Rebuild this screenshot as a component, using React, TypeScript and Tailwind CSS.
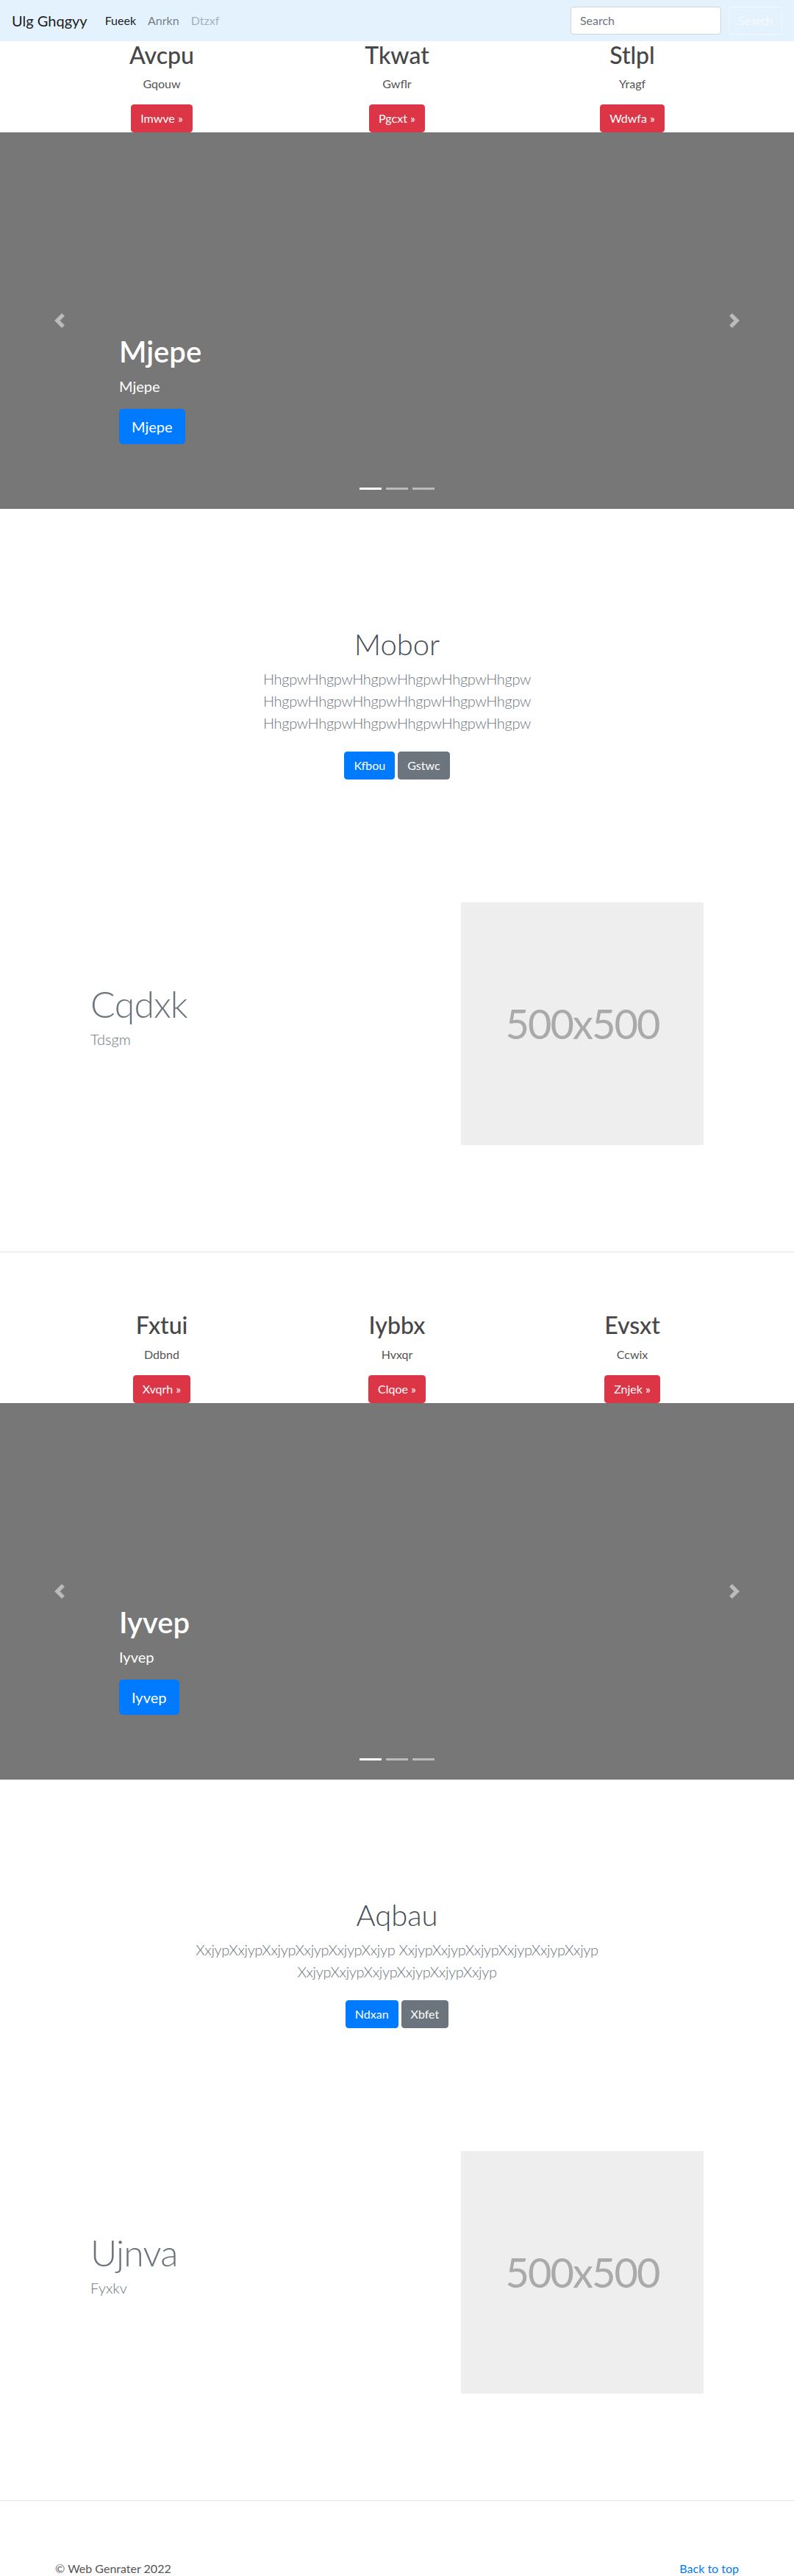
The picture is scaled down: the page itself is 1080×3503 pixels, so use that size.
import React from "react";

type Mk = { t: string; s: string; b: string };

function Marketing({ items, top }: { items: Mk[]; top: string }) {
  return (
    <div className={"mx-auto grid w-[960px] grid-cols-3 " + top}>
      {items.map((it) => (
        <div key={it.t} className="px-[15px] text-center">
          <h2 className="mb-2 text-[32px] leading-[1.2] font-medium text-[#474747]">{it.t}</h2>
          <p className="mb-4 text-base leading-6 text-[#555555]">{it.s}</p>
          <div className="flex justify-center">
            <a className="rounded-[4px] border border-[#dc3545] bg-[#dc3545] px-3 py-[6px] text-base leading-6 text-white">
              {it.b} »
            </a>
          </div>
        </div>
      ))}
    </div>
  );
}

function Chevron({ dir }: { dir: "l" | "r" }) {
  return (
    <svg width="20" height="20" viewBox="0 0 8 8" fill="#fff">
      {dir === "l" ? (
        <path d="M5.25 0l-4 4 4 4 1.5-1.5L4.25 4l2.5-2.5L5.25 0z" />
      ) : (
        <path d="M2.75 0l-1.5 1.5L3.75 4l-2.5 2.5L2.75 8l4-4-4-4z" />
      )}
    </svg>
  );
}

function Carousel({ title }: { title: string }) {
  return (
    <div className="relative mb-16 h-[512px] bg-[#777777]">
      <div className="absolute left-0 top-0 bottom-0 flex w-[15%] items-center justify-center opacity-50">
        <Chevron dir="l" />
      </div>
      <div className="absolute right-0 top-0 bottom-0 flex w-[15%] items-center justify-center opacity-50">
        <Chevron dir="r" />
      </div>
      <div className="absolute left-[15%] right-[15%] bottom-[88px] text-left text-white">
        <h1 className="mb-2 text-[40px] leading-[1.2] font-semibold">{title}</h1>
        <p className="mb-4 text-[20px] leading-[30px]">{title}</p>
        <div className="flex">
          <a className="rounded-[5px] border border-[#007bff] bg-[#007bff] px-4 py-2 text-[20px] leading-[30px] text-white">
            {title}
          </a>
        </div>
      </div>
      <div className="absolute left-0 right-0 bottom-[26px] flex justify-center gap-[6px]">
        <span className="h-[3px] w-[30px] bg-white" />
        <span className="h-[3px] w-[30px] bg-white opacity-50" />
        <span className="h-[3px] w-[30px] bg-white opacity-50" />
      </div>
    </div>
  );
}

function Jumbo({ title, lead, b1, b2 }: { title: string; lead: string; b1: string; b2: string }) {
  return (
    <section className="py-24 text-center">
      <div className="mx-auto w-[610px]">
        <h1 className="mb-2 text-[40px] leading-[1.2] font-light text-[#454d55]">{title}</h1>
        <p className="mb-4 text-[20px] leading-[30px] font-light tracking-[-0.3px] text-[#6c757d]">{lead}</p>
        <div className="mb-4 flex justify-center gap-1 py-2">
          <a className="rounded-[4px] border border-[#007bff] bg-[#007bff] px-3 py-[6px] text-base leading-6 text-white">{b1}</a>
          <a className="rounded-[4px] border border-[#6c757d] bg-[#6c757d] px-3 py-[6px] text-base leading-6 text-white">{b2}</a>
        </div>
      </div>
    </section>
  );
}

function Featurette({ title, sub }: { title: string; sub: string }) {
  return (
    <div className="pt-[47px] pb-[145px]">
      <div className="mx-auto flex w-[864px] items-center">
        <div className="w-7/12 px-[15px]">
          <h2 className="mb-2 text-[50px] leading-none font-light tracking-[-0.8px] text-[#6c757d]">{title}</h2>
          <p className="mb-4 text-[20px] leading-[30px] font-light text-[#6c757d]">{sub}</p>
        </div>
        <div className="w-5/12 px-[15px]">
          <div className="flex h-[330px] w-[330px] items-center justify-center bg-[#eeeeee] text-[56px] tracking-[-2px] text-[#aaaaaa]">
            500x500
          </div>
        </div>
      </div>
    </div>
  );
}

export default function App() {
  const h = "HhgpwHhgpwHhgpwHhgpwHhgpwHhgpw";
  const x = "XxjypXxjypXxjypXxjypXxjypXxjyp";
  return (
    <div className="min-h-[3503px] bg-white font-['Lato','Liberation_Sans',sans-serif] text-[#212529]">
      <nav className="flex h-[56px] items-center bg-[#e3f2fd] px-4">
        <span className="mr-4 text-[20px] leading-[30px] text-black/90">Ulg Ghqgyy</span>
        <a className="px-2 text-base text-black/90">Fueek</a>
        <a className="px-2 text-base text-black/50">Anrkn</a>
        <a className="px-2 text-base text-black/30">Dtzxf</a>
        <div className="ml-auto flex items-center">
          <div className="mr-[10px] flex h-[38px] w-[205px] items-center rounded-[4px] border border-[#ced4da] bg-white px-3 text-base text-[#6c757d]">
            Search
          </div>
          <a className="rounded-[4px] border border-[#f8f9fa]/70 px-3 py-[6px] text-base leading-6 text-[#f8f9fa]">Search</a>
        </div>
      </nav>

      <Marketing
        top=""
        items={[
          { t: "Avcpu", s: "Gqouw", b: "Imwve" },
          { t: "Tkwat", s: "Gwflr", b: "Pgcxt" },
          { t: "Stlpl", s: "Yragf", b: "Wdwfa" },
        ]}
      />
      <Carousel title="Mjepe" />
      <Jumbo title="Mobor" lead={`${h} ${h} ${h}`} b1="Kfbou" b2="Gstwc" />
      <Featurette title="Cqdxk" sub="Tdsgm" />
      <hr className="border-t border-[#e5e5e5]" />

      <Marketing
        top="pt-20"
        items={[
          { t: "Fxtui", s: "Ddbnd", b: "Xvqrh" },
          { t: "Iybbx", s: "Hvxqr", b: "Clqoe" },
          { t: "Evsxt", s: "Ccwix", b: "Znjek" },
        ]}
      />
      <Carousel title="Iyvep" />
      <Jumbo title="Aqbau" lead={`${x} ${x} ${x}`} b1="Ndxan" b2="Xbfet" />
      <Featurette title="Ujnva" sub="Fyxkv" />
      <hr className="border-t border-[#e5e5e5]" />

      <footer className="mx-auto flex w-[960px] justify-between px-[15px] pt-20">
        <p className="text-base leading-6 text-[#555555]">© Web Genrater 2022</p>
        <a className="text-base leading-6 text-[#007bff]">Back to top</a>
      </footer>
    </div>
  );
}
